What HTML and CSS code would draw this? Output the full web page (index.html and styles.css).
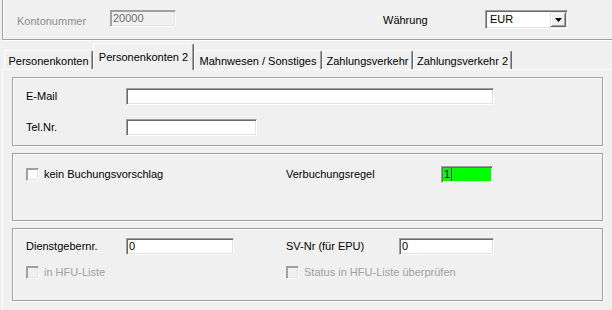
FILE: index.html
```html
<!DOCTYPE html>
<html>
<head>
<meta charset="utf-8">
<link rel="stylesheet" href="styles.css">
</head>
<body>
<div class="window">
  <div class="header">
    <span class="lbl-konto">Kontonummer</span>
    <div class="field disabled konto">20000</div>
    <span class="lbl-waehrung">Währung</span>
    <div class="select">
      <span class="select-val">EUR</span>
      <span class="select-btn"><svg width="7" height="4" viewBox="0 0 7 4"><polygon points="0,0 7,0 3.5,4" fill="#000"/></svg></span>
    </div>
  </div>
  <div class="tabs">
    <div class="tab t1">Personenkonten</div>
    <div class="tab t2 active">Personenkonten 2</div>
    <div class="tab t3">Mahnwesen / Sonstiges</div>
    <div class="tab t4">Zahlungsverkehr</div>
    <div class="tab t5">Zahlungsverkehr 2</div>
  </div>
  <div class="panel">
    <div class="group g1">
      <div class="row">
        <span class="lbl">E-Mail</span>
        <div class="field w-email"></div>
      </div>
      <div class="row gap14">
        <span class="lbl">Tel.Nr.</span>
        <div class="field w-tel"></div>
      </div>
    </div>
    <div class="group g2">
      <div class="row">
        <label class="cb-item"><span class="cb"></span><span>kein Buchungsvorschlag</span></label>
        <span class="lbl-right w-verb">Verbuchungsregel</span>
        <div class="field green">1<span class="caret"></span></div>
      </div>
    </div>
    <div class="group g3">
      <div class="row">
        <span class="lbl">Dienstgebernr.</span>
        <div class="field w-dg">0</div>
        <span class="lbl-right w-sv">SV-Nr (für EPU)</span>
        <div class="field w-svf">0</div>
      </div>
      <div class="row gap9">
        <label class="cb-item disabled-item"><span class="cb cb-disabled"></span><span>in HFU-Liste</span></label>
        <label class="cb-item disabled-item"><span class="cb cb-disabled"></span><span>Status in HFU-Liste überprüfen</span></label>
      </div>
    </div>
  </div>
</div>
</body>
</html>
```
FILE: styles.css
```css
html, body {
  margin: 0;
  padding: 0;
  background: #f0f0f0;
}
body {
  font-family: "Liberation Sans", Arial, sans-serif;
  font-size: 11px;
  color: #000;
}
.window {
  width: 612px;
  height: 310px;
  overflow: hidden;
  background: #f0f0f0;
}

/* header */
.header {
  margin-left: 2px;
  height: 40px;
  box-sizing: border-box;
  border-left: 1px solid #a0a0a0;
  border-bottom: 1px solid #a0a0a0;
  box-shadow: inset 1px 0 #fff, 0 1px #fff;
  display: flex;
  align-items: flex-start;
}
.lbl-konto {
  margin-left: 14px;
  margin-top: 15px;
  width: 93px;
  line-height: 13px;
  color: #8d8d8d;
}
.lbl-waehrung {
  margin-left: 207px;
  margin-top: 14px;
  width: 102px;
  line-height: 13px;
}

/* fields */
.field {
  box-sizing: border-box;
  height: 17px;
  background: #fff;
  border: 1px solid;
  border-color: #a0a0a0 #fff #fff #a0a0a0;
  box-shadow: inset 1px 1px #696969, inset -1px -1px #e3e3e3;
  padding-left: 2px;
  line-height: 15px;
  white-space: nowrap;
}
.field.disabled {
  background: #f0f0f0;
  color: #6d6d6d;
  box-shadow: inset 1px 1px #a0a0a0, inset -1px -1px #e3e3e3;
}
.konto {
  margin-top: 10px;
  width: 66px;
}
.select {
  margin-top: 10px;
  width: 83px;
  height: 19px;
  box-sizing: border-box;
  background: #fff;
  border: 1px solid;
  border-color: #a0a0a0 #fff #fff #a0a0a0;
  box-shadow: inset 1px 1px #696969, inset -1px -1px #e3e3e3;
  display: flex;
  justify-content: space-between;
  align-items: flex-start;
}
.select-val {
  padding-left: 4px;
  line-height: 17px;
}
.select-btn {
  box-sizing: border-box;
  width: 16px;
  height: 15px;
  margin-top: 1px;
  margin-right: 1px;
  background: #f0f0f0;
  border: 1px solid;
  border-color: #e3e3e3 #696969 #696969 #e3e3e3;
  box-shadow: inset 1px 1px #fff, inset -1px -1px #a0a0a0;
  display: flex;
  align-items: center;
  justify-content: center;
}

/* tabs */
.tabs {
  display: flex;
  align-items: flex-end;
  height: 29px;
  padding-left: 4px;
}
.tab {
  box-sizing: border-box;
  height: 19px;
  border-top: 1px solid #fff;
  border-left: 1px solid #fff;
  border-right: 1px solid #696969;
  box-shadow: inset -1px 0 #a0a0a0;
  border-radius: 2px 2px 0 0;
  text-align: center;
  padding-top: 4px;
  line-height: 13px;
  white-space: nowrap;
}
.tab.active {
  height: 27px;
  padding-top: 7px;
  margin-bottom: -1px;
  position: relative;
  z-index: 1;
  background: #f0f0f0;
}
.t1 { width: 89px; }
.t2 { width: 101px; }
.t3 { width: 128px; }
.t4 { width: 91px; }
.t5 { width: 99px; }

/* panel */
.panel {
  margin-left: 2px;
  border-top: 1px solid #fff;
  border-left: 1px solid #fff;
  padding: 7px 0 0 9px;
  height: 300px;
}
.group {
  box-sizing: border-box;
  width: 591px;
  border: 1px solid #a0a0a0;
  box-shadow: inset 1px 1px #fff, 1px 1px #fff;
  padding-left: 13px;
  margin-bottom: 7px;
}
.g1 { height: 69px; padding-top: 10px; }
.g2 { height: 68px; padding-top: 12px; }
.g3 { height: 73px; padding-top: 9px; }

.row {
  display: flex;
  align-items: center;
  height: 17px;
}
.gap14 { margin-top: 14px; }
.gap9 { margin-top: 9px; }
.lbl {
  width: 100px;
  line-height: 13px;
}
.lbl-right { line-height: 13px; }
.w-email { width: 368px; }
.w-tel { width: 131px; }
.w-dg { width: 108px; margin-right: 52px; }
.w-verb { width: 155px; }
.w-sv { width: 113px; }
.w-svf { width: 95px; }

.field.green {
  width: 52px;
  background: #00ff00;
  display: flex;
  align-items: center;
  box-shadow: inset 1px 1px #696969, inset -1px -1px #e3e3e3;
}
.caret {
  display: inline-block;
  width: 1px;
  height: 13px;
  margin-left: 1px;
  background: #9a1fc8;
}

/* checkboxes */
.cb-item {
  width: 260px;
  display: flex;
  align-items: center;
  gap: 5px;
  line-height: 13px;
}
.cb {
  box-sizing: border-box;
  width: 13px;
  height: 13px;
  background: #fff;
  border: 1px solid;
  border-color: #a0a0a0 #fff #fff #a0a0a0;
  box-shadow: inset 1px 1px #a0a0a0, inset -1px -1px #e3e3e3;
}
.cb-disabled {
  background: #f0f0f0;
}
.disabled-item {
  color: #a0a0a0;
}
```
